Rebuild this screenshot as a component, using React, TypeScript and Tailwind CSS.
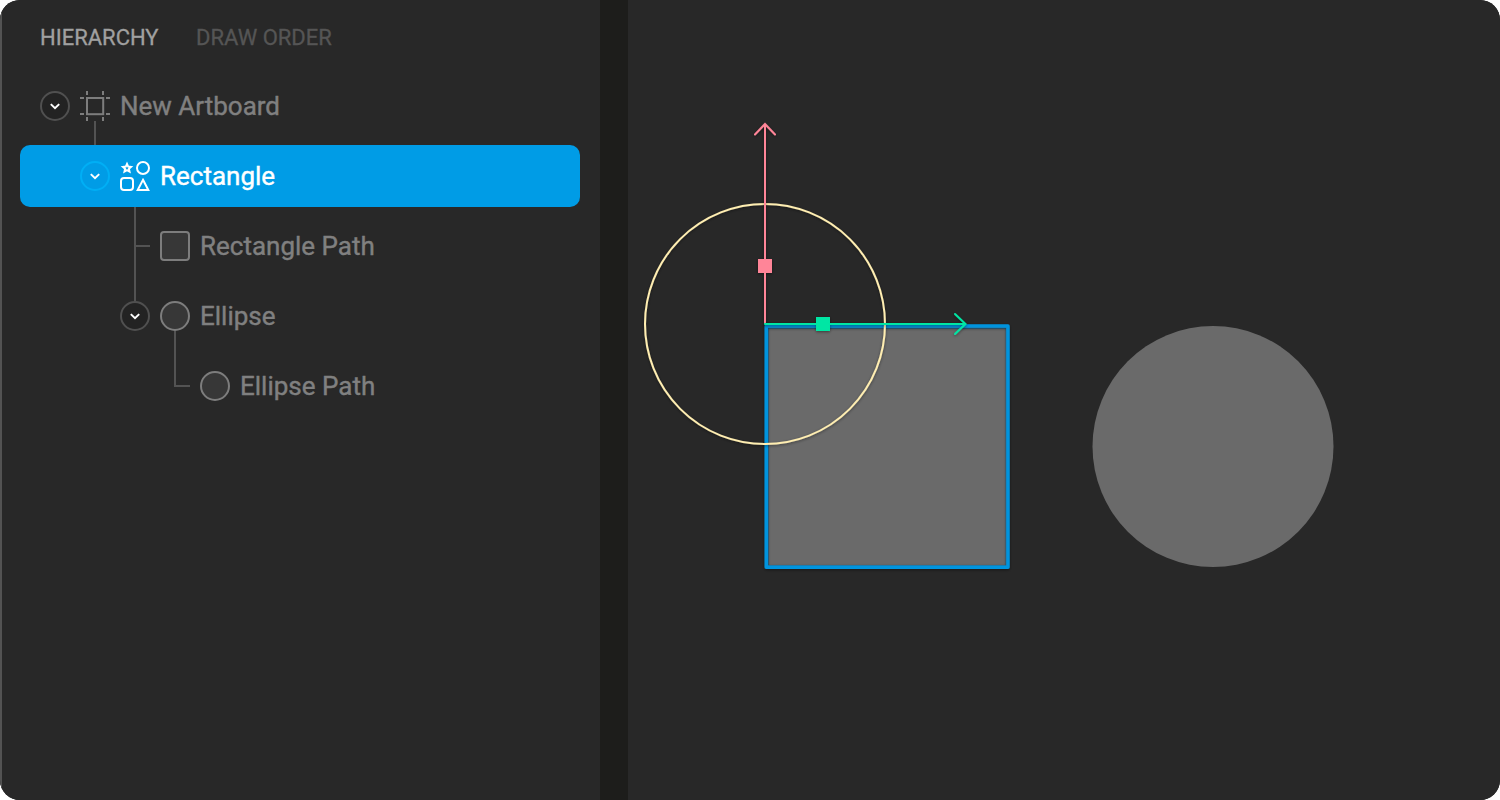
import type { ReactNode } from "react";

function Toggle({ active = false }: { active?: boolean }) {
  return (
    <svg viewBox="0 0 30 30" className="size-[30px] shrink-0" fill="none">
      <circle
        cx="15"
        cy="15"
        r="14"
        strokeWidth="2"
        className={active ? "stroke-[#00aff5]" : "fill-[#232323] stroke-[#505050]"}
      />
      <path d="M10.8 13.1 15 17.1 19.2 13.1" className="stroke-white" strokeWidth="2" />
    </svg>
  );
}

function ArtboardIcon() {
  return (
    <svg viewBox="0 0 30 30" className="size-[30px] shrink-0 stroke-[#7d7d7d]" fill="none" strokeWidth="2">
      <rect x="7" y="7" width="16.2" height="16.2" />
      <path d="M7 0V4M23 0V4M7 26V30M23 26V30M0 7H4M26 7H30M0 23H4M26 23H30" />
    </svg>
  );
}

function ShapesIcon() {
  return (
    <svg viewBox="0 0 30 30" className="size-[30px] shrink-0 stroke-white" fill="none" strokeWidth="2">
      <path
        d="M7 3 8.2 5.6 11 5.9 8.9 7.8 9.5 10.6 7 9.2 4.5 10.6 5.1 7.8 3 5.9 5.8 5.6Z"
        strokeWidth="2"
      />
      <circle cx="23" cy="7" r="6" />
      <rect x="1" y="17" width="12" height="12" rx="3" />
      <path d="M23 18.8 28.3 29H17.7Z" />
    </svg>
  );
}

function PathIcon({ round = false }: { round?: boolean }) {
  return (
    <span
      className={
        round
          ? "size-[30px] shrink-0 rounded-full border-2 border-[#7d7d7d] bg-[#373737]"
          : "size-[30px] shrink-0 rounded-[4px] border-2 border-[#7d7d7d] bg-[#373737]"
      }
    />
  );
}

function Row({ className, children }: { className: string; children: ReactNode }) {
  return (
    <li
      className={`relative flex h-[62px] items-center gap-[10px] rounded-[10px] text-[26px] [-webkit-text-stroke:0.4px] ${className}`}
    >
      {children}
    </li>
  );
}

function Hierarchy() {
  return (
    <aside className="flex w-[600px] shrink-0 flex-col border-l-2 border-[#535353] bg-[#282828] pr-5 pl-[18px]">
      <nav className="flex h-[75px] items-center gap-[37.5px] pl-5 text-[22px] [-webkit-text-stroke:0.3px]">
        <span className="text-[#a0a0a0]">HIERARCHY</span>
        <span className="text-[#555555]">DRAW ORDER</span>
      </nav>
      <ul className="flex flex-col gap-2">
        <Row className="pl-5 text-[#808080]">
          <Toggle />
          <ArtboardIcon />
          <span>New Artboard</span>
          <i className="absolute top-[46px] left-[74px] h-6 w-[2px] bg-[#535353]" />
        </Row>
        <Row className="bg-[#009ce6] pl-[60px] text-white">
          <Toggle active />
          <ShapesIcon />
          <span>Rectangle</span>
        </Row>
        <Row className="pl-[140px] text-[#808080]">
          <i className="absolute -top-2 left-[114px] h-[94px] w-[2px] bg-[#535353]" />
          <i className="absolute top-[30px] left-[114px] h-[2px] w-4 bg-[#535353]" />
          <PathIcon />
          <span>Rectangle Path</span>
        </Row>
        <Row className="pl-[100px] text-[#808080]">
          <Toggle />
          <PathIcon round />
          <span>Ellipse</span>
        </Row>
        <Row className="pl-[180px] text-[#808080]">
          <i className="absolute -top-6 left-[154px] h-14 w-4 border-b-2 border-l-2 border-[#535353]" />
          <PathIcon round />
          <span>Ellipse Path</span>
        </Row>
      </ul>
    </aside>
  );
}

function Stage() {
  return (
    <main className="min-w-0 flex-1 bg-[#282828]">
      <svg viewBox="628 0 872 800" className="block h-[800px] w-[872px]" fill="none">
        <defs>
          <filter id="shade" x="600" y="80" width="460" height="520" filterUnits="userSpaceOnUse">
            <feDropShadow dx="0" dy="1" stdDeviation="1.5" floodColor="#000" floodOpacity="0.45" />
          </filter>
        </defs>
        <circle cx="1213" cy="446.5" r="120.5" fill="#6a6a6a" />
        <rect x="766" y="325" width="243" height="243" fill="#6a6a6a" />
        <rect x="768.5" y="328.5" width="237.5" height="237" stroke="#316a8d" />
        <rect x="766.25" y="326" width="241.75" height="241.25" stroke="#0594de" strokeWidth="3.5" strokeLinejoin="round" filter="url(#shade)" />
        <circle cx="765" cy="324" r="120" stroke="#ffeeb2" strokeWidth="2" filter="url(#shade)" />
        <g filter="url(#shade)" stroke="#ff8598" strokeWidth="2">
          <path d="M765 323V124M755 134.5 765 124 775 134.5" strokeLinecap="round" />
          <rect x="758" y="259" width="14" height="14" fill="#ff8598" stroke="none" />
        </g>
        <g filter="url(#shade)" stroke="#00e6a4" strokeWidth="2">
          <path d="M765 324H965M955 314 965.5 324 955 334" strokeLinecap="round" />
          <rect x="816" y="317" width="14" height="14" fill="#00e6a4" stroke="none" />
        </g>
      </svg>
    </main>
  );
}

export default function App() {
  return (
    <div className="flex h-[800px] w-[1500px] overflow-hidden rounded-[20px] bg-[#1d1d1b] font-['Roboto',sans-serif]">
      <Hierarchy />
      <div className="w-7 shrink-0 bg-[#1d1d1b]" />
      <Stage />
    </div>
  );
}
